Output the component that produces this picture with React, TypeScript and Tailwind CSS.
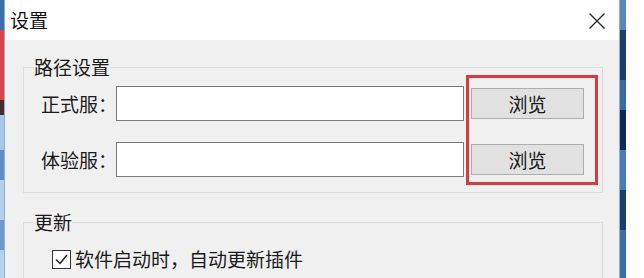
import React from "react";

const font = { fontFamily: '"Noto Sans CJK SC", "Noto Sans", sans-serif' };

function Row({ label }: { label: string }) {
  return (
    <div className="flex items-center">
      <div className="w-[75px] shrink-0 whitespace-nowrap text-[19px] leading-[22px] text-[#1a1a1a]">{label}</div>
      <div className="h-[35px] w-[348px] shrink-0 border border-[#7a7a7a] bg-white" />
      <button className="ml-[7px] flex h-[31px] w-[113px] shrink-0 items-center justify-center border border-[#adadad] bg-[#e1e1e1] text-[19px] leading-[22px] text-[#1a1a1a]">
        浏览
      </button>
    </div>
  );
}

export default function App() {
  return (
    <div className="flex h-[278px] w-[644px] overflow-hidden bg-white" style={font}>
      <div className="flex h-full w-[4px] shrink-0 flex-col">
        <div className="h-[30px] bg-[#3d6fa8]" />
        <div className="h-[70px] bg-[#d4464b]" />
        <div className="h-[15px] bg-[#4a2a2a]" />
        <div className="h-[35px] bg-[#a9c6e6]" />
        <div className="h-[30px] bg-[#5f8fc0]" />
        <div className="h-[40px] bg-[#b4cfea]" />
        <div className="h-[30px] bg-[#6d98c7]" />
        <div className="flex-1 bg-[#b7d1ec]" />
      </div>
      <div className="relative flex h-full w-[616px] shrink-0 flex-col border-x border-[#8aafd8] bg-[#f0f0f0]">
        <div className="flex h-[40px] shrink-0 items-center justify-between bg-white pl-[5px] pr-[13px]">
          <span className="text-[19px] leading-[22px] text-[#111]">设置</span>
          <svg width="18" height="18" viewBox="0 0 18 18" className="mt-[1px]">
            <path d="M1.5 1.5 L16.5 16.5 M16.5 1.5 L1.5 16.5" stroke="#2b2b2b" strokeWidth="1.4" fill="none" />
          </svg>
        </div>
        <fieldset className="ml-[18px] mr-[16px] mt-[16px] shrink-0 border border-[#dcdcdc] p-0">
          <legend className="ml-[10px] p-0 text-[19px] leading-[22px] text-[#1a1a1a]">路径设置</legend>
          <div className="flex flex-col gap-[21px] pb-[15px] pl-[17px] pt-[8px]">
            <Row label="正式服：" />
            <Row label="体验服：" />
          </div>
        </fieldset>
        <fieldset className="ml-[18px] mr-[16px] mt-[18px] shrink-0 border border-[#dcdcdc] p-0">
          <legend className="ml-[10px] p-0 text-[19px] leading-[22px] text-[#1a1a1a]">更新</legend>
          <div className="flex items-center gap-[4px] pb-[20px] pl-[28px] pt-[15px]">
            <div className="flex h-[19px] w-[19px] items-center justify-center border border-[#333] bg-white">
              <svg width="15" height="15" viewBox="0 0 15 15">
                <path d="M2 7.5 L6 11.5 L13 3" stroke="#222" strokeWidth="1.5" fill="none" />
              </svg>
            </div>
            <span className="text-[19px] leading-[22px] text-[#1a1a1a]">软件启动时，自动更新插件</span>
          </div>
        </fieldset>
        <div className="absolute left-[461px] top-[75px] h-[110px] w-[132px] border-[3px] border-[#d43c41]" />
      </div>
      <div className="flex h-full w-[6px] shrink-0 flex-col">
        <div className="h-[30px] bg-[#5b86b8]" />
        <div className="h-[50px] bg-[#1f3f6a]" />
        <div className="h-[30px] bg-[#3a6aa0]" />
        <div className="h-[40px] bg-[#0f2a50]" />
        <div className="h-[40px] bg-[#4a7db5]" />
        <div className="h-[40px] bg-[#1c3d68]" />
        <div className="flex-1 bg-[#3d6ea6]" />
      </div>
    </div>
  );
}
